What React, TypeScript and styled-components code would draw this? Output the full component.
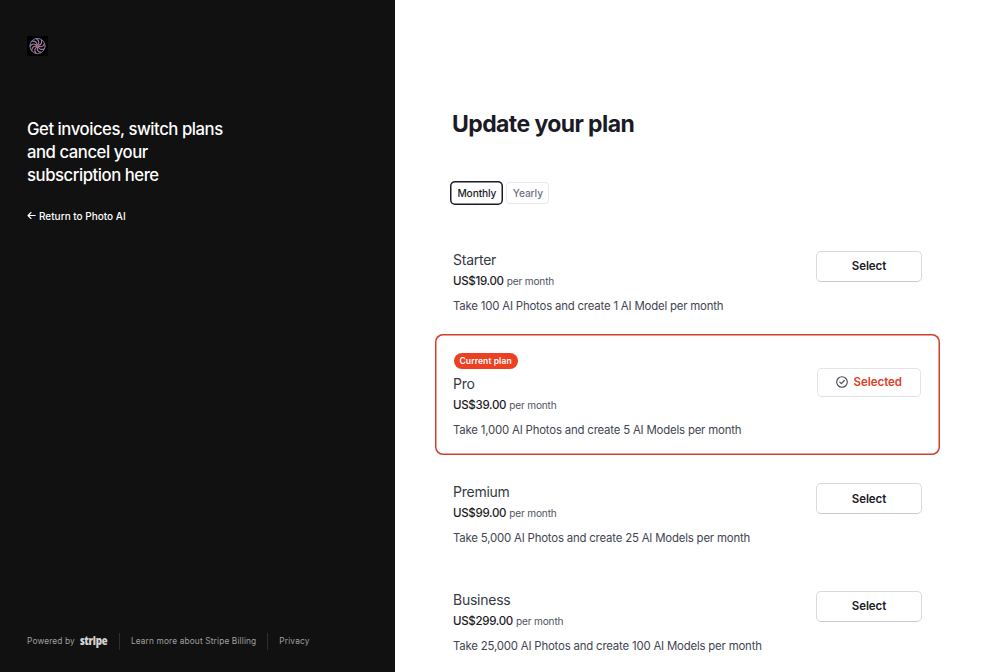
import React from "react";
import styled, { createGlobalStyle } from "styled-components";

const GlobalStyle = createGlobalStyle`
  *, *::before, *::after { box-sizing: border-box; }
  body { margin: 0; background: #fff; font-family: Inter, "Liberation Sans", sans-serif; }
  h1, h2, h3, p { margin: 0; font-weight: 400; }
  a { color: inherit; text-decoration: none; }
  button { font-family: inherit; cursor: pointer; }
`;

const Page = styled.div`
  display: flex;
  height: 672px;
  overflow: hidden;
`;

const Sidebar = styled.aside`
  width: 394.5px;
  flex: none;
  display: flex;
  flex-direction: column;
  padding: 36px 27px 21px;
  background: #111;
  color: #fff;
`;

const Logo = styled.svg`
  display: block;
  width: 21px;
  height: 20px;
  background: #000;
`;

const Tagline = styled.h2`
  margin-top: 62px;
  font-size: 16.7px;
  line-height: 23px;
  font-weight: 450;
  letter-spacing: -0.45px;
  white-space: nowrap;
`;

const ReturnLink = styled.a`
  display: flex;
  align-items: center;
  gap: 3px;
  margin-top: 21.5px;
  font-size: 10px;
  line-height: 14px;
  font-weight: 500;
`;

const Footer = styled.footer`
  display: flex;
  align-items: center;
  height: 20px;
  margin-top: auto;
  font-size: 8.3px;
  letter-spacing: 0.15px;
  color: #a0a0a0;
  white-space: nowrap;
`;

const Wordmark = styled.span`
  width: 28px;
  margin: -1px 0 0 5px;
  font-family: "Open Sans", sans-serif;
  font-size: 12px;
  line-height: 16px;
  font-weight: 800;
  font-stretch: 80%;
  letter-spacing: -0.2px;
  color: #d4d4d4;
`;

const Divider = styled.span`
  width: 1px;
  height: 17px;
  margin: 0 11px;
  background: #2e2e2e;
`;

const Main = styled.main`
  flex: 1;
  padding: 109px 60.5px 0 40.5px;
  color: #1a1b25;
`;

const Title = styled.h1`
  margin-left: 17px;
  font-size: 23px;
  line-height: 31px;
  font-weight: 700;
  letter-spacing: -0.59px;
`;

const Intervals = styled.div`
  display: flex;
  align-items: center;
  gap: 3px;
  height: 24px;
  margin: 41px 0 0 15.4px;
`;

const IntervalButton = styled.button<{ $active?: boolean }>`
  width: ${(p) => (p.$active ? 53 : 43)}px;
  height: ${(p) => (p.$active ? 24 : 22)}px;
  padding: 0;
  border: ${(p) => (p.$active ? "none" : "1px solid #e6e8ec")};
  box-shadow: ${(p) => (p.$active ? "inset 0 0 0 1.5px #1a1b25" : "none")};
  border-radius: ${(p) => (p.$active ? 5 : 4)}px;
  background: #fff;
  color: ${(p) => (p.$active ? "#1a1b25" : "#6a7383")};
  font-size: 10.2px;
  font-weight: 500;
  letter-spacing: -0.1px;
`;

const Plans = styled.div`
  display: flex;
  flex-direction: column;
  gap: 4px;
  margin-top: 21.6px;
`;

const Card = styled.section<{ $current?: boolean }>`
  display: flex;
  justify-content: space-between;
  height: ${(p) => (p.$current ? 121 : 103.5)}px;
  padding: ${(p) => (p.$current ? "19px 19px" : "22px 18px")} 0 18px;
  border-radius: 8px;
  box-shadow: ${(p) => (p.$current ? "inset 0 0 0 1.5px #d0402b" : "none")};
`;

const Details = styled.div`
  display: flex;
  flex-direction: column;
  align-items: flex-start;
  white-space: nowrap;
`;

const Badge = styled.span`
  height: 16px;
  margin: 0 0 4px 0.5px;
  padding: 0 6px;
  border-radius: 8px;
  background: #ed4023;
  color: #fff;
  font-size: 8.5px;
  line-height: 16px;
  font-weight: 600;
  letter-spacing: 0.09px;
`;

const PlanName = styled.h3`
  font-size: 14px;
  line-height: 22px;
  letter-spacing: -0.25px;
  color: #353a44;
`;

const Price = styled.p`
  font-size: 11.5px;
  line-height: 21px;
  font-weight: 500;
  letter-spacing: -0.3px;
  color: #1a1b25;
`;

const Period = styled.span`
  margin-left: 3px;
  font-size: 10.1px;
  font-weight: 400;
  letter-spacing: -0.16px;
  color: #50545f;
`;

const Description = styled.p`
  margin-top: 5px;
  font-size: 11.4px;
  line-height: 18px;
  letter-spacing: -0.19px;
  color: #414552;
`;

const PlanButton = styled.button<{ $current?: boolean }>`
  display: flex;
  align-items: center;
  justify-content: center;
  gap: 5.5px;
  width: ${(p) => (p.$current ? 104 : 106)}px;
  height: ${(p) => (p.$current ? 29 : 31)}px;
  margin-top: ${(p) => (p.$current ? "14.6px" : "2px")};
  padding: 0 0 0 1px;
  border: 1px solid ${(p) => (p.$current ? "#e3e4e7" : "#d8dade")};
  border-bottom-color: ${(p) => (p.$current ? "#dfe0e3" : "#c8cacf")};
  border-radius: 5px;
  background: #fff;
  color: ${(p) => (p.$current ? "#e03e26" : "#1a1b25")};
  font-size: 11.5px;
  font-weight: 600;
  letter-spacing: -0.05px;
`;

type Plan = { name: string; price: string; description: string; current?: boolean };

const plans: Plan[] = [
  { name: "Starter", price: "US$19.00", description: "Take 100 AI Photos and create 1 AI Model per month" },
  { name: "Pro", price: "US$39.00", description: "Take 1,000 AI Photos and create 5 AI Models per month", current: true },
  { name: "Premium", price: "US$99.00", description: "Take 5,000 AI Photos and create 25 AI Models per month" },
  { name: "Business", price: "US$299.00", description: "Take 25,000 AI Photos and create 100 AI Models per month" },
];

const SwirlLogo = () => (
  <Logo viewBox="0 0 21 20" fill="none">
    <defs>
      <linearGradient id="swirl" x1="3" y1="3" x2="18" y2="18" gradientUnits="userSpaceOnUse">
        <stop stopColor="#7484b8" />
        <stop offset="0.5" stopColor="#b87c9c" />
        <stop offset="1" stopColor="#8468b0" />
      </linearGradient>
    </defs>
    <g stroke="url(#swirl)" strokeLinecap="round">
      <circle cx="10.5" cy="10" r="7.6" strokeWidth="0.9" />
      {Array.from({ length: 9 }, (_, i) => (
        <path key={i} d="M10.5 9C12.6 7.2 12.2 4.4 9.4 2.8" strokeWidth="1.15" transform={`rotate(${i * 40} 10.5 10)`} />
      ))}
    </g>
  </Logo>
);

const BackArrow = () => (
  <svg width="9" height="9" viewBox="0 0 9 9" fill="none" stroke="#fff" strokeWidth="1.1" strokeLinecap="round" strokeLinejoin="round">
    <path d="M8.2 4.5H1M4 1.5L1 4.5L4 7.5" />
  </svg>
);

const CheckCircle = () => (
  <svg width="12" height="12" viewBox="0 0 12 12" fill="none" stroke="#414552" strokeLinecap="round" strokeLinejoin="round">
    <circle cx="6" cy="6" r="5.3" strokeWidth="1.1" />
    <path d="M3.8 6.2L5.3 7.7L8.3 4.5" strokeWidth="1.1" />
  </svg>
);

export default function App() {
  return (
    <>
      <GlobalStyle />
      <Page>
        <Sidebar>
          <SwirlLogo />
          <Tagline>
            Get invoices, switch plans
            <br />
            and cancel your
            <br />
            subscription here
          </Tagline>
          <ReturnLink href="#">
            <BackArrow />
            <span>Return to Photo AI</span>
          </ReturnLink>
          <Footer>
            <span>Powered by</span>
            <Wordmark>stripe</Wordmark>
            <Divider />
            <a href="#">Learn more about Stripe Billing</a>
            <Divider />
            <a href="#">Privacy</a>
          </Footer>
        </Sidebar>
        <Main>
          <Title>Update your plan</Title>
          <Intervals>
            <IntervalButton $active>Monthly</IntervalButton>
            <IntervalButton>Yearly</IntervalButton>
          </Intervals>
          <Plans>
            {plans.map((plan) => (
              <Card key={plan.name} $current={plan.current}>
                <Details>
                  {plan.current && <Badge>Current plan</Badge>}
                  <PlanName>{plan.name}</PlanName>
                  <Price>
                    {plan.price}
                    <Period>per month</Period>
                  </Price>
                  <Description>{plan.description}</Description>
                </Details>
                <PlanButton $current={plan.current}>
                  {plan.current && <CheckCircle />}
                  <span>{plan.current ? "Selected" : "Select"}</span>
                </PlanButton>
              </Card>
            ))}
          </Plans>
        </Main>
      </Page>
    </>
  );
}
